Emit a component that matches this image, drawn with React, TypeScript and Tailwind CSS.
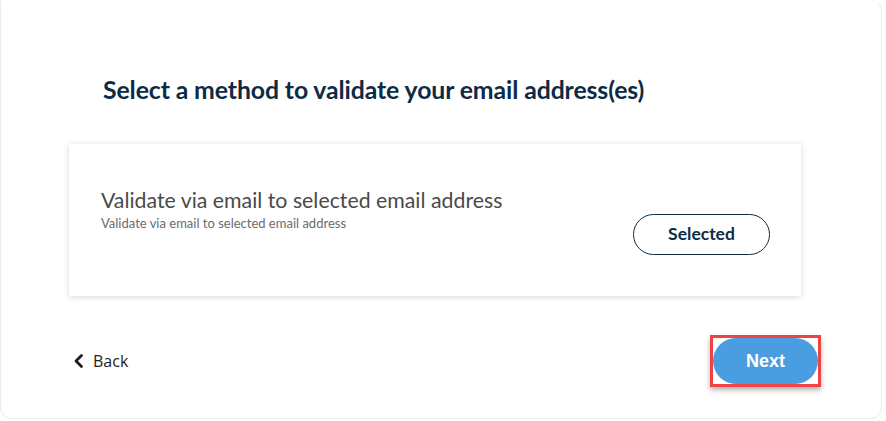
import React from 'react';

export default function App() {
  return (
    <div className="w-[886px] h-[421px] bg-white overflow-hidden" style={{ fontFamily: 'Lato, sans-serif' }}>
      <div className="w-[882px] h-[419px] rounded-b-xl rounded-tr-xl border border-[#ececec] border-t-transparent bg-white flex flex-col">
        <h1 className="ml-[102px] mt-[74px] text-[24.8px] font-bold text-[#0d2b45] leading-[30px] tracking-[-0.1px]">
          Select a method to validate your email address(es)
        </h1>

        <div className="ml-[68px] mt-[39px] w-[732px] h-[152px] bg-white shadow-[0_1px_6px_rgba(0,0,0,0.16)] flex items-center justify-between pl-[32px] pr-[31px]">
          <div className="flex flex-col -mt-[24px]">
            <span className="text-[21.3px] text-[#4a4a4a] leading-[28px]">Validate via email to selected email address</span>
            <span className="text-[13px] text-[#6b6b6b] leading-[16px] mt-[1px]">Validate via email to selected email address</span>
          </div>
          <button className="w-[137px] h-[41px] rounded-full border border-[#0d2b45] text-[17.5px] font-bold text-[#0d2b45] mt-[28px]">
            Selected
          </button>
        </div>

        <div className="mt-[39px] ml-[72px] mr-[60px] flex items-center justify-between">
          <button className="flex items-center gap-[8px] text-[16px] text-[#222]" style={{ fontFamily: '"Open Sans", sans-serif' }}>
            <svg width="12" height="16" viewBox="0 0 12 16" fill="none">
              <path d="M8.5 2.5 L3 8 L8.5 13.5" stroke="#1a1a1a" strokeWidth="2.8" strokeLinecap="round" strokeLinejoin="round" />
            </svg>
            Back
          </button>
          <div className="border-[3px] border-[#ee4444] shadow-[0_3px_5px_rgba(0,0,0,0.3)] w-[111px] h-[52px] flex">
            <button
              className="flex-1 rounded-full bg-[#4a9de0] text-white text-[18px] font-bold"
              style={{ fontFamily: '"Liberation Sans", Arial, sans-serif' }}
            >
              Next
            </button>
          </div>
        </div>
      </div>
    </div>
  );
}
